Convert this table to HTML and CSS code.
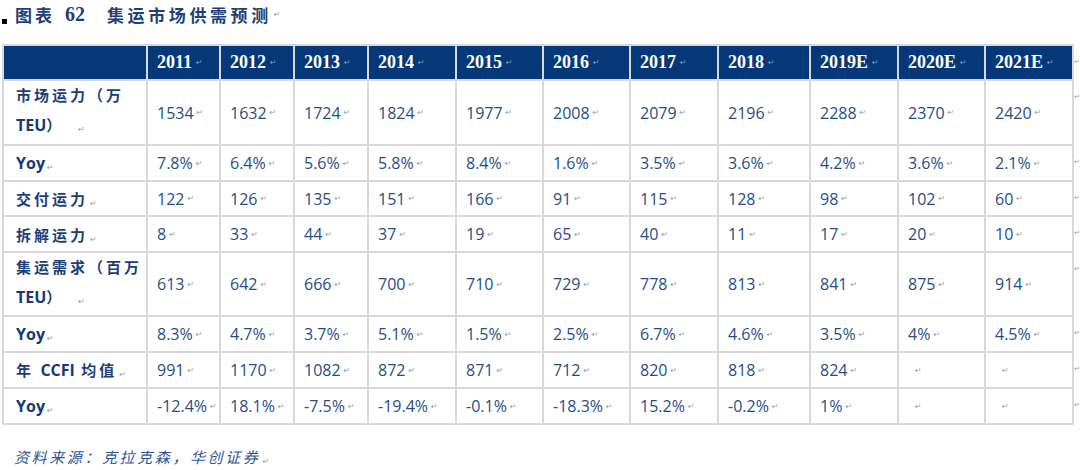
FILE: index.html
```html
<!DOCTYPE html>
<html lang="zh-CN">
<head>
<meta charset="utf-8">
<title>集运市场供需预测</title>
<link rel="stylesheet" href="styles.css">
</head>
<body>
<div class="page">
  <div class="title">
    <span class="bullet"></span>
    <span class="t-cn">图表</span>
    <span class="t-num">62</span>
    <span class="t-main">集运市场供需预测</span><span class="rm">↵</span>
  </div>

  <div class="tablewrap">
    <div class="grid">
      <div class="hd"></div>
      <div class="hd">2011<span class="rm">↵</span></div>
      <div class="hd">2012<span class="rm">↵</span></div>
      <div class="hd">2013<span class="rm">↵</span></div>
      <div class="hd">2014<span class="rm">↵</span></div>
      <div class="hd">2015<span class="rm">↵</span></div>
      <div class="hd">2016<span class="rm">↵</span></div>
      <div class="hd">2017<span class="rm">↵</span></div>
      <div class="hd">2018<span class="rm">↵</span></div>
      <div class="hd">2019E<span class="rm">↵</span></div>
      <div class="hd">2020E<span class="rm">↵</span></div>
      <div class="hd">2021E<span class="rm">↵</span></div>

      <div class="lb lb2"><span class="ln">市场运力（万</span><span class="ln"><b class="en">TEU</b>）<span class="rm gap">↵</span></span></div>
      <div class="vc">1534<span class="rm">↵</span></div>
      <div class="vc">1632<span class="rm">↵</span></div>
      <div class="vc">1724<span class="rm">↵</span></div>
      <div class="vc">1824<span class="rm">↵</span></div>
      <div class="vc">1977<span class="rm">↵</span></div>
      <div class="vc">2008<span class="rm">↵</span></div>
      <div class="vc">2079<span class="rm">↵</span></div>
      <div class="vc">2196<span class="rm">↵</span></div>
      <div class="vc">2288<span class="rm">↵</span></div>
      <div class="vc">2370<span class="rm">↵</span></div>
      <div class="vc">2420<span class="rm">↵</span></div>

      <div class="lb"><span class="ln"><b class="en">Yoy</b><span class="rm">↵</span></span></div>
      <div class="vc">7.8%<span class="rm">↵</span></div>
      <div class="vc">6.4%<span class="rm">↵</span></div>
      <div class="vc">5.6%<span class="rm">↵</span></div>
      <div class="vc">5.8%<span class="rm">↵</span></div>
      <div class="vc">8.4%<span class="rm">↵</span></div>
      <div class="vc">1.6%<span class="rm">↵</span></div>
      <div class="vc">3.5%<span class="rm">↵</span></div>
      <div class="vc">3.6%<span class="rm">↵</span></div>
      <div class="vc">4.2%<span class="rm">↵</span></div>
      <div class="vc">3.6%<span class="rm">↵</span></div>
      <div class="vc">2.1%<span class="rm">↵</span></div>

      <div class="lb"><span class="ln">交付运力<span class="rm">↵</span></span></div>
      <div class="vc">122<span class="rm">↵</span></div>
      <div class="vc">126<span class="rm">↵</span></div>
      <div class="vc">135<span class="rm">↵</span></div>
      <div class="vc">151<span class="rm">↵</span></div>
      <div class="vc">166<span class="rm">↵</span></div>
      <div class="vc">91<span class="rm">↵</span></div>
      <div class="vc">115<span class="rm">↵</span></div>
      <div class="vc">128<span class="rm">↵</span></div>
      <div class="vc">98<span class="rm">↵</span></div>
      <div class="vc">102<span class="rm">↵</span></div>
      <div class="vc">60<span class="rm">↵</span></div>

      <div class="lb"><span class="ln">拆解运力<span class="rm">↵</span></span></div>
      <div class="vc">8<span class="rm">↵</span></div>
      <div class="vc">33<span class="rm">↵</span></div>
      <div class="vc">44<span class="rm">↵</span></div>
      <div class="vc">37<span class="rm">↵</span></div>
      <div class="vc">19<span class="rm">↵</span></div>
      <div class="vc">65<span class="rm">↵</span></div>
      <div class="vc">40<span class="rm">↵</span></div>
      <div class="vc">11<span class="rm">↵</span></div>
      <div class="vc">17<span class="rm">↵</span></div>
      <div class="vc">20<span class="rm">↵</span></div>
      <div class="vc">10<span class="rm">↵</span></div>

      <div class="lb lb2"><span class="ln">集运需求（百万</span><span class="ln"><b class="en">TEU</b>）<span class="rm gap">↵</span></span></div>
      <div class="vc">613<span class="rm">↵</span></div>
      <div class="vc">642<span class="rm">↵</span></div>
      <div class="vc">666<span class="rm">↵</span></div>
      <div class="vc">700<span class="rm">↵</span></div>
      <div class="vc">710<span class="rm">↵</span></div>
      <div class="vc">729<span class="rm">↵</span></div>
      <div class="vc">778<span class="rm">↵</span></div>
      <div class="vc">813<span class="rm">↵</span></div>
      <div class="vc">841<span class="rm">↵</span></div>
      <div class="vc">875<span class="rm">↵</span></div>
      <div class="vc">914<span class="rm">↵</span></div>

      <div class="lb"><span class="ln"><b class="en">Yoy</b><span class="rm">↵</span></span></div>
      <div class="vc">8.3%<span class="rm">↵</span></div>
      <div class="vc">4.7%<span class="rm">↵</span></div>
      <div class="vc">3.7%<span class="rm">↵</span></div>
      <div class="vc">5.1%<span class="rm">↵</span></div>
      <div class="vc">1.5%<span class="rm">↵</span></div>
      <div class="vc">2.5%<span class="rm">↵</span></div>
      <div class="vc">6.7%<span class="rm">↵</span></div>
      <div class="vc">4.6%<span class="rm">↵</span></div>
      <div class="vc">3.5%<span class="rm">↵</span></div>
      <div class="vc">4%<span class="rm">↵</span></div>
      <div class="vc">4.5%<span class="rm">↵</span></div>

      <div class="lb"><span class="ln">年 <b class="en">CCFI</b> 均值<span class="rm">↵</span></span></div>
      <div class="vc">991<span class="rm">↵</span></div>
      <div class="vc">1170<span class="rm">↵</span></div>
      <div class="vc">1082<span class="rm">↵</span></div>
      <div class="vc">872<span class="rm">↵</span></div>
      <div class="vc">871<span class="rm">↵</span></div>
      <div class="vc">712<span class="rm">↵</span></div>
      <div class="vc">820<span class="rm">↵</span></div>
      <div class="vc">818<span class="rm">↵</span></div>
      <div class="vc">824<span class="rm">↵</span></div>
      <div class="vc empty"><span class="rm">↵</span></div>
      <div class="vc empty"><span class="rm">↵</span></div>

      <div class="lb"><span class="ln"><b class="en">Yoy</b><span class="rm">↵</span></span></div>
      <div class="vc">-12.4%<span class="rm">↵</span></div>
      <div class="vc">18.1%<span class="rm">↵</span></div>
      <div class="vc">-7.5%<span class="rm">↵</span></div>
      <div class="vc">-19.4%<span class="rm">↵</span></div>
      <div class="vc">-0.1%<span class="rm">↵</span></div>
      <div class="vc">-18.3%<span class="rm">↵</span></div>
      <div class="vc">15.2%<span class="rm">↵</span></div>
      <div class="vc">-0.2%<span class="rm">↵</span></div>
      <div class="vc">1%<span class="rm">↵</span></div>
      <div class="vc empty"><span class="rm">↵</span></div>
      <div class="vc empty"><span class="rm">↵</span></div>
    </div>

    <div class="marks">
      <span class="rm">↵</span><span class="rm">↵</span><span class="rm">↵</span>
      <span class="rm">↵</span><span class="rm">↵</span><span class="rm">↵</span>
      <span class="rm">↵</span><span class="rm">↵</span><span class="rm">↵</span>
    </div>
  </div>

  <div class="source">资料来源：克拉克森，华创证券<span class="rm">↵</span></div>
</div>
</body>
</html>
```

FILE: styles.css
```css
html, body {
  margin: 0;
  padding: 0;
  background: #ffffff;
}

body {
  width: 1080px;
  height: 470px;
  overflow: hidden;
  font-family: "Open Sans", "Noto Sans CJK SC", sans-serif;
}

.page {
  display: flex;
  flex-direction: column;
}

/* ---------- title ---------- */
.title {
  height: 28px;
  display: flex;
  align-items: center;
  padding-left: 2px;
  margin-bottom: 16px;
  color: #1d3f7a;
  font-weight: 700;
}

.bullet {
  width: 5px;
  height: 5px;
  background: #000;
  align-self: flex-end;
  margin-bottom: 4px;
  margin-right: 8px;
}

.t-cn {
  font-family: "Noto Sans CJK SC", sans-serif;
  font-size: 17px;
  letter-spacing: 3px;
  font-weight: 700;
}

.t-num {
  font-family: "Liberation Serif", serif;
  font-size: 20px;
  font-weight: 700;
  margin-left: 10px;
  margin-right: 22px;
}

.t-main {
  font-family: "Noto Sans CJK SC", sans-serif;
  font-size: 17px;
  letter-spacing: 3.6px;
  font-weight: 700;
}

/* ---------- return marks ---------- */
.rm {
  font-family: "DejaVu Sans", sans-serif;
  font-size: 8px;
  font-weight: 400;
  color: #9a9a9a;
  margin-left: 2px;
  letter-spacing: 0;
  vertical-align: -1px;
}

.rm.gap {
  margin-left: 14px;
}

/* ---------- table ---------- */
.tablewrap {
  display: flex;
  align-items: flex-start;
  height: 381px;
}

.grid {
  margin-left: 2px;
  display: grid;
  grid-template-columns: 142px 71px 72px 72px 86px 85px 85px 86px 90px 86px 85px 86px;
  grid-template-rows: 33px 63px 34px 33px 34px 62px 34px 34px 34px;
  gap: 2px;
  padding: 2px;
  background: #d9d9d9;
}

.grid > div {
  background: #ffffff;
  display: flex;
  align-items: center;
  white-space: nowrap;
}

.grid > .hd {
  background: #053878;
  color: #ffffff;
  font-family: "Liberation Serif", serif;
  font-size: 18px;
  font-weight: 700;
  padding-left: 9px;
}

.grid > .hd .rm {
  color: #8c9cb8;
  margin-left: 4px;
}

.grid > .lb {
  padding-left: 12px;
  color: #1b3f7b;
  font-family: "Noto Sans CJK SC", sans-serif;
  font-size: 15px;
  font-weight: 700;
  letter-spacing: 3px;
}

.grid > .lb2 {
  flex-direction: column;
  align-items: flex-start;
  justify-content: center;
  line-height: 30px;
}

.ln {
  display: block;
}

.en {
  font-family: "Open Sans", sans-serif;
  font-size: 16px;
  font-weight: 700;
  letter-spacing: 0;
  color: #153a76;
}

.grid > .vc {
  padding-left: 9px;
  color: #1f4e8b;
  font-family: "Open Sans", sans-serif;
  font-size: 16px;
}

.grid > .vc .rm {
  margin-left: 3px;
}

.grid > .vc.empty {
  padding-left: 13px;
}

.marks {
  display: grid;
  grid-template-rows: 33px 63px 34px 33px 34px 62px 34px 34px 34px;
  row-gap: 2px;
  padding-top: 2px;
  margin-left: 0;
}

.marks .rm {
  margin-left: 0;
  margin-top: 12px;
  font-size: 7px;
  line-height: 8px;
}

/* ---------- source ---------- */
.source {
  margin-top: 22px;
  padding-left: 14px;
  height: 20px;
  line-height: 20px;
  color: #2e5597;
  font-family: "Noto Sans CJK SC", sans-serif;
  font-size: 15px;
  font-style: italic;
  letter-spacing: 2.6px;
}
```
